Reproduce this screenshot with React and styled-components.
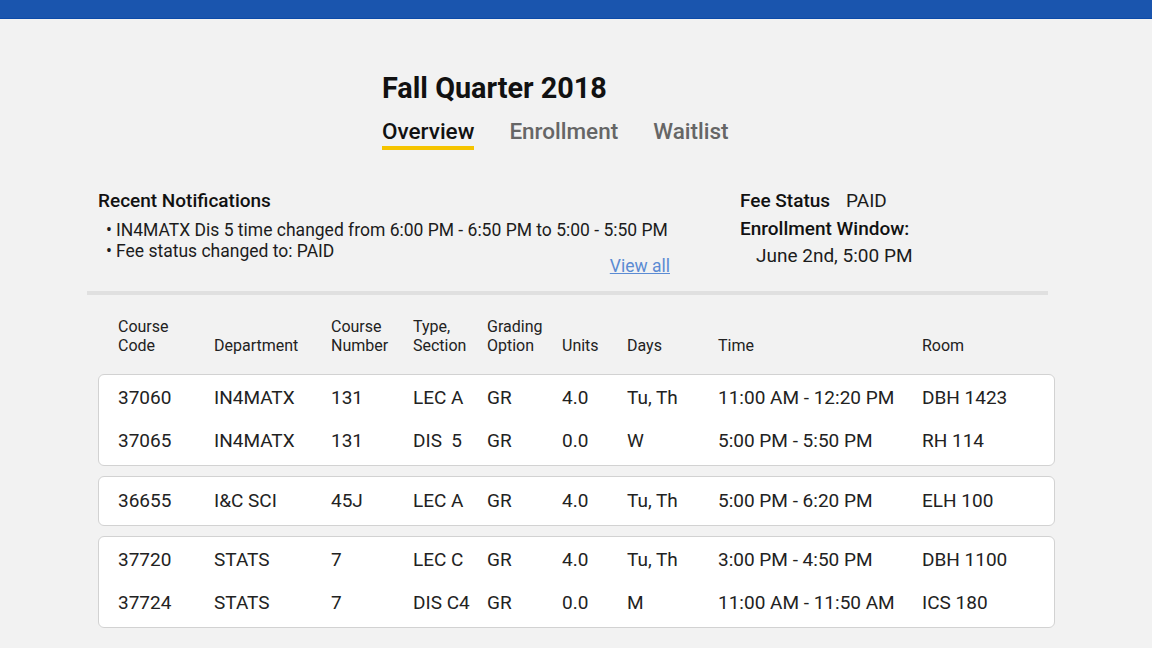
import styled, { createGlobalStyle } from 'styled-components';

const GlobalStyle = createGlobalStyle`
  body {
    margin: 0;
    background: #f2f2f2;
    font-family: Roboto, "Liberation Sans", sans-serif;
    color: #1c1c1c;
  }
`;

const courseGroups = [
  [
    ['37060', 'IN4MATX', '131', 'LEC A', 'GR', '4.0', 'Tu, Th', '11:00 AM - 12:20 PM', 'DBH 1423'],
    ['37065', 'IN4MATX', '131', 'DIS  5', 'GR', '0.0', 'W', '5:00 PM - 5:50 PM', 'RH 114'],
  ],
  [['36655', 'I&C SCI', '45J', 'LEC A', 'GR', '4.0', 'Tu, Th', '5:00 PM - 6:20 PM', 'ELH 100']],
  [
    ['37720', 'STATS', '7', 'LEC C', 'GR', '4.0', 'Tu, Th', '3:00 PM - 4:50 PM', 'DBH 1100'],
    ['37724', 'STATS', '7', 'DIS C4', 'GR', '0.0', 'M', '11:00 AM - 11:50 AM', 'ICS 180'],
  ],
];

const headers = [
  ['Course', 'Code'],
  ['Department'],
  ['Course', 'Number'],
  ['Type,', 'Section'],
  ['Grading', 'Option'],
  ['Units'],
  ['Days'],
  ['Time'],
  ['Room'],
];

function App() {
  return (
    <>
      <GlobalStyle />
      <TopBar />
      <Header>
        <Title>Fall Quarter 2018</Title>
        <Tabs>
          <Tab active>Overview</Tab>
          <Tab>Enrollment</Tab>
          <Tab>Waitlist</Tab>
        </Tabs>
      </Header>
      <Main>
        <Summary>
          <Notifications>
            <SectionTitle>Recent Notifications</SectionTitle>
            <NoteList>
              <li>IN4MATX Dis 5 time changed from 6:00 PM - 6:50 PM to 5:00 - 5:50 PM</li>
              <li>Fee status changed to: PAID</li>
            </NoteList>
            <ViewAll href="#">View all</ViewAll>
          </Notifications>
          <Status>
            <StatusLine>
              <SectionTitle>Fee Status</SectionTitle>
              <StatusValue>PAID</StatusValue>
            </StatusLine>
            <SectionTitle>Enrollment Window:</SectionTitle>
            <WindowValue>June 2nd, 5:00 PM</WindowValue>
          </Status>
        </Summary>
        <Divider />
        <Table>
          <HeaderRow>
            {headers.map((lines, i) => (
              <HeaderCell key={i}>
                {lines.map((l) => (
                  <div key={l}>{l}</div>
                ))}
              </HeaderCell>
            ))}
          </HeaderRow>
          {courseGroups.map((group, gi) => (
            <Card key={gi}>
              {group.map((row) => (
                <Row key={row[0]}>
                  {row.map((cell, ci) => (
                    <Cell key={ci}>{cell}</Cell>
                  ))}
                </Row>
              ))}
            </Card>
          ))}
        </Table>
      </Main>
    </>
  );
}

const TopBar = styled.div`
  height: 18px;
  background: #1a55ae;
  border-bottom: 1px solid #0c4aa8;
`;

const Header = styled.header`
  padding: 52px 0 0 382px;
`;

const Title = styled.h1`
  margin: 0;
  font-size: 28.8px;
  font-weight: 700;
  line-height: 34px;
  color: #111;
`;

const Tabs = styled.nav`
  display: flex;
  gap: 35px;
  margin-top: 13px;
`;

const Tab = styled.div`
  font-size: 22.5px;
  line-height: 26px;
  padding-bottom: 2px;
  color: ${(p) => (p.active ? '#111' : '#666')};
  font-weight: 500;
  border-bottom: 4px solid ${(p) => (p.active ? '#f5c400' : 'transparent')};
`;

const Main = styled.main`
  padding: 37px 0 0 88px;
  width: 967px;
`;

const Summary = styled.section`
  display: flex;
  padding-left: 10px;
  height: 98px;
`;

const Notifications = styled.div`
  width: 574px;
  display: flex;
  flex-direction: column;
`;

const SectionTitle = styled.div`
  font-size: 19px;
  font-weight: 500;
  line-height: 28px;
  color: #111;
`;

const NoteList = styled.ul`
  list-style: none;
  margin: 5px 0 0;
  padding: 0 0 0 8px;
  font-size: 17.5px;
  line-height: 21px;
  white-space: nowrap;

  li::before {
    content: '•';
    display: inline-block;
    width: 10px;
  }
`;

const ViewAll = styled.a`
  align-self: flex-end;
  font-size: 17.5px;
  line-height: 21px;
  margin-top: -6px;
  margin-right: 2px;
  color: #5b8bd3;
  text-decoration: underline;
`;

const Status = styled.div`
  margin-left: 68px;
`;

const StatusLine = styled.div`
  display: flex;
  gap: 16px;
`;

const StatusValue = styled.span`
  font-size: 19px;
  line-height: 28px;
`;

const WindowValue = styled.div`
  font-size: 19px;
  line-height: 26px;
  padding-left: 16px;
`;

const Divider = styled.hr`
  margin: 6px 0 0 -1px;
  width: 961px;
  height: 4px;
  border: none;
  background: #e0e0e0;
`;

const Table = styled.div`
  margin-left: 10px;
  display: flex;
  flex-direction: column;
  gap: 10px;
`;

const columns = '96px 117px 82px 74px 75px 65px 91px 204px 1fr';

const HeaderRow = styled.div`
  display: grid;
  grid-template-columns: ${columns};
  align-items: end;
  padding: 22px 20px 9px;
  font-size: 16px;
  line-height: 19px;
  color: #222;
`;

const HeaderCell = styled.div``;

const Card = styled.div`
  box-sizing: border-box;
  min-height: 50px;
  display: flex;
  flex-direction: column;
  justify-content: center;
  background: #fff;
  border: 1.5px solid #d2d2d2;
  border-radius: 6px;
  padding: 1px 0 3px;
`;

const Row = styled.div`
  display: grid;
  grid-template-columns: ${columns};
  align-items: center;
  height: 43px;
  padding: 0 20px 0 19px;
`;

const Cell = styled.div`
  font-size: 19px;
  color: #222;
  white-space: pre;
`;

export default App;
